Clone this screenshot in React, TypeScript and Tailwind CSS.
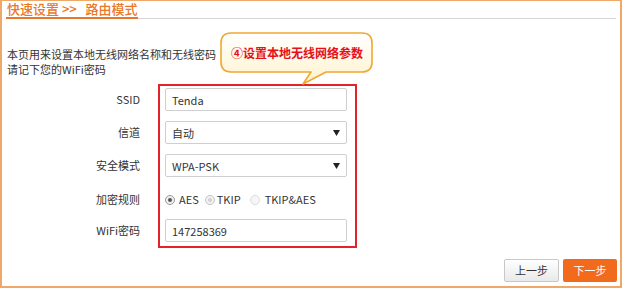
import React from 'react';

const font = { fontFamily: '"Noto Sans CJK SC", "Liberation Sans", sans-serif' };

// Small black triangle used by the fake selects
const Caret: React.FC = () => (
  <svg width="7" height="6" viewBox="0 0 7 6" className="mr-[6px]">
    <path d="M0 0 H7 L3.5 6 Z" fill="#222" />
  </svg>
);

const Radio: React.FC<{ tone: 'on' | 'dim' | 'off' }> = ({ tone }) => (
  <span
    className={
      'flex h-[10px] w-[10px] items-center justify-center rounded-full border ' +
      (tone === 'on'
        ? 'border-[#9a9a9a] bg-[#f0f0f0]'
        : tone === 'dim'
        ? 'border-[#c4c4c4] bg-[#f2f2f2]'
        : 'border-[#dcdcdc] bg-[#f6f6f6]')
    }
  >
    {tone === 'on' && <span className="h-[4px] w-[4px] rounded-full bg-[#555]" />}
    {tone === 'dim' && <span className="h-[4px] w-[4px] rounded-full bg-[#d0d0d0]" />}
  </span>
);

const Field: React.FC<{ value: string; select?: boolean; className?: string }> = ({ value, select, className }) => (
  <div
    className={
      'flex h-[23px] w-[182px] items-center justify-between rounded-[2px] border border-[#cfcfcf] bg-white pl-[6px] text-[11px] text-[#333] ' +
      (className ?? '')
    }
  >
    <span className="leading-[14px]">{value}</span>
    {select && <Caret />}
  </div>
);

export default function App() {
  const labels = ['SSID', '信道', '安全模式', '加密规则', 'WiFi密码'];
  const rowMargins = ['mt-0', 'mt-[10px]', 'mt-[10px]', 'mt-[11px]', 'mt-[8px]'];

  return (
    <div
      className="relative flex h-[288px] w-[622px] flex-col border-x-2 border-b-2 border-t border-[#f0a868] bg-white"
      style={font}
    >
      {/* Title bar */}
      <div className="mx-[4px] flex border-b border-[#d4d4d4]">
        <span className="-mb-px border-b-2 border-[#e9782a] pl-px text-[13px] font-medium leading-[16px] text-[#e9782a]">
          快速设置 &gt;&gt;&nbsp;&nbsp;&nbsp;路由模式
        </span>
      </div>

      {/* Intro text */}
      <div className="ml-[5px] mt-[28px] text-[11px] leading-[15px] text-[#333]">
        <p>本页用来设置本地无线网络名称和无线密码</p>
        <p>请记下您的WiFi密码</p>
      </div>

      {/* Form */}
      <div className="mt-[7px] flex">
        <div className="flex w-[138px] flex-col pt-[4px] text-right text-[11px] text-[#333]">
          {labels.map((l, i) => (
            <div key={l} className={'flex h-[23px] items-center justify-end ' + rowMargins[i]}>
              {l}
            </div>
          ))}
        </div>
        <div className="ml-[18px] flex flex-col border-2 border-[#e3232c] pb-[4px] pl-[5px] pr-[8px] pt-[2px]">
          <Field value="Tenda" />
          <Field value="自动" select className="mt-[10px]" />
          <Field value="WPA-PSK" select className="mt-[10px]" />
          <div className="mt-[11px] flex h-[23px] items-center text-[11px] text-[#333]">
            <Radio tone="on" />
            <span className="ml-[4px]">AES</span>
            <span className="ml-[6px]">
              <Radio tone="dim" />
            </span>
            <span className="ml-[2px]">TKIP</span>
            <span className="ml-[9px]">
              <Radio tone="off" />
            </span>
            <span className="ml-[5px]">TKIP&amp;AES</span>
          </div>
          <Field value="147258369" className="mt-[8px]" />
        </div>
      </div>

      {/* Buttons */}
      <div className="mt-[11px] flex justify-end gap-[4px] pr-[3px]">
        <button className="flex h-[23px] w-[55px] items-center justify-center rounded-[2px] border border-[#c8c8c8] bg-gradient-to-b from-white to-[#e9e9e9] text-[11px] text-[#333]">
          上一步
        </button>
        <button className="flex h-[23px] w-[54px] items-center justify-center rounded-[2px] bg-[#f26b1d] text-[11px] text-white">
          下一步
        </button>
      </div>

      {/* Callout bubble */}
      <svg className="absolute left-[217px] top-[30px]" width="156" height="56" viewBox="0 0 156 56">
        <defs>
          <linearGradient id="bub" x1="0" y1="0" x2="0" y2="1">
            <stop offset="0" stopColor="#ffffff" />
            <stop offset="1" stopColor="#fff3cc" />
          </linearGradient>
        </defs>
        <path
          d="M12 2 H143 Q153 2 153 12 V31 Q153 41 143 41 H107 L84 53 L92 41 H12 Q2 41 2 31 V12 Q2 2 12 2 Z"
          fill="url(#bub)"
          stroke="#f0a830"
          strokeWidth="1.6"
          strokeLinejoin="round"
        />
      </svg>
      <div className="absolute left-[219px] top-[32px] flex h-[39px] w-[152px] items-center justify-center text-[12px] font-bold text-[#e5101c]">
        ④设置本地无线网络参数
      </div>
    </div>
  );
}
